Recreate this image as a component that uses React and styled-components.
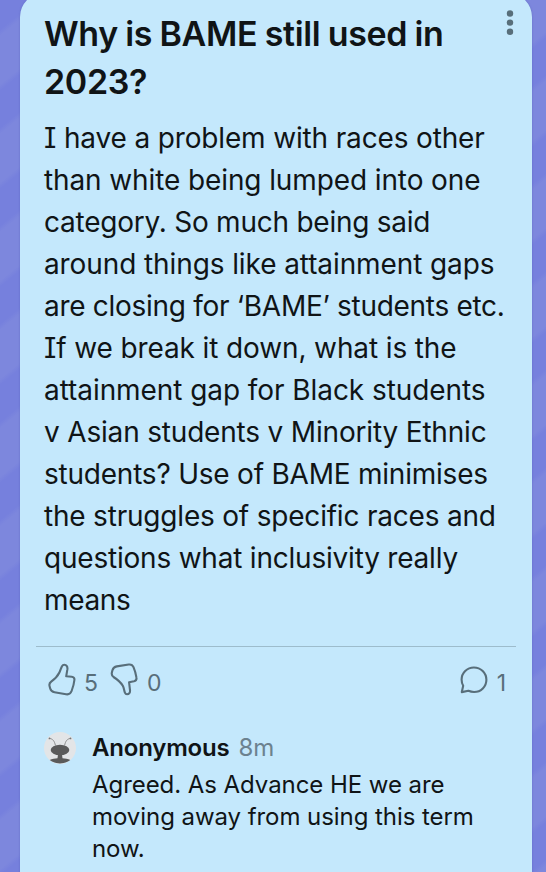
import React from 'react';
import styled, { createGlobalStyle } from 'styled-components';

const GlobalStyle = createGlobalStyle`
    *, *::before, *::after {
        box-sizing: border-box;
    }

    body {
        margin: 0;
        font-family: Inter, 'Liberation Sans', sans-serif;
        color: #101416;
        overflow: hidden;
    }
`;

const Board = styled.main`
    width: 546px;
    height: 872px;
    padding: 0 14px 0 20px;
    overflow: hidden;
    background: repeating-linear-gradient(
        140.8deg,
        #7680dd 0,
        #7680dd 23px,
        #7d87dd 28px,
        #7d87dd 65.5px,
        #7680dd 70.5px,
        #7680dd 76px
    );
`;

const Card = styled.article`
    height: 940px;
    margin-top: -7px;
    padding: 17px 16px 0;
    border-radius: 24px;
    background: #c4e8fc;
    box-shadow: 0 0 2px rgba(60, 70, 160, 0.4);
`;

const CardHeader = styled.header`
    display: flex;
    justify-content: space-between;
    padding-left: 8px;
`;

const Title = styled.h1`
    margin: 0;
    font-size: 34px;
    line-height: 48px;
    font-weight: 600;
    letter-spacing: -0.33px;
    word-spacing: -0.9px;
    white-space: pre-line;
`;

const MenuButton = styled.button`
    display: flex;
    width: 12px;
    height: 26px;
    padding: 0;
    border: 0;
    background: none;
    color: #586e7a;
`;

const PostBody = styled.p`
    margin: 11px 0 25px 8px;
    font-size: 28px;
    line-height: 42px;
    font-feature-settings: 'cv08';
    white-space: pre;
`;

const Line = styled.span`
    display: block;
    letter-spacing: ${({ $tracking }) => $tracking}px;
`;

const Reactions = styled.div`
    display: flex;
    align-items: center;
    height: 73px;
    padding: 0 10px 0 12px;
    border-top: 1px solid #9dbccc;
    color: #586e7a;
`;

const Reaction = styled.div`
    display: flex;
    align-items: center;
    gap: ${({ $gap }) => $gap}px;
    margin-right: ${({ $after }) => $after || 0}px;
    margin-left: ${({ $end }) => ($end ? 'auto' : '0')};
    font-size: 23px;
    line-height: 32px;

    svg {
        margin-bottom: 7px;
    }
`;

const Comment = styled.section`
    display: flex;
    gap: 16px;
    padding: 12px 0 0 8px;
    letter-spacing: -0.06px;
`;

const Avatar = styled.svg`
    flex: none;
    width: 32px;
    height: 32px;
    margin-top: 1px;
`;

const CommentMeta = styled.div`
    display: flex;
    gap: 9px;
    height: 38px;
    font-size: 24px;
    line-height: 34px;
`;

const Author = styled.span`
    font-weight: 600;
    letter-spacing: -0.2px;
`;

const Time = styled.time`
    color: #6c828f;
`;

const CommentText = styled.p`
    margin: 0;
    font-size: 24px;
    line-height: 32px;
    white-space: pre;
`;

const title = `Why is BAME still used in
2023?`;

const body = [
    { text: 'I have a problem with races other', tracking: -0.15 },
    { text: 'than white being lumped into one', tracking: -0.11 },
    { text: 'category. So much being said', tracking: -0.24 },
    { text: 'around things like attainment gaps', tracking: -0.1 },
    { text: 'are closing for ‘BAME’ students etc.', tracking: -0.29 },
    { text: 'If we break it down, what is the', tracking: -0.12 },
    { text: 'attainment gap for Black students', tracking: -0.07 },
    { text: 'v Asian students v Minority Ethnic', tracking: -0.18 },
    { text: 'students? Use of BAME minimises', tracking: -0.22 },
    { text: 'the struggles of specific races and', tracking: -0.2 },
    { text: 'questions what inclusivity really', tracking: -0.21 },
    { text: 'means', tracking: -0.35 },
];

const reply = `Agreed. As Advance HE we are
moving away from using this term
now.`;

const outline = {
    fill: 'none',
    stroke: 'currentColor',
    strokeWidth: 2.1,
    strokeLinejoin: 'round',
    strokeLinecap: 'round',
};

const DotsIcon = () => (
    <svg width="12" height="26" viewBox="0 0 12 26" fill="currentColor">
        <circle cx="6" cy="3.5" r="3.2" />
        <circle cx="6" cy="12.6" r="3.2" />
        <circle cx="6" cy="21.7" r="3.2" />
    </svg>
);

const ThumbUp = () => (
    <svg width="28" height="33" viewBox="0 0 28 33" {...outline}>
        <path d="M16.3 1.8C18.6 1.8 19.7 3.8 19.4 6.2L18.2 13.3L23.8 13.7C25.6 13.9 26.6 15.1 26.4 17C26 21 24.8 24.8 23.6 28C22.6 30.6 20.6 31.7 18 31.2L6.5 29.3C4.3 28.9 2.8 27.6 2.2 25.5L1.6 23.3C1 21.2 1.7 19.7 3.2 18.6C6.6 16.2 9.6 13.2 11.4 9.5C12.6 7 13 5 14 3.2C14.5 2.3 15.2 1.8 16.3 1.8Z" />
    </svg>
);

const ThumbDown = () => (
    <svg width="28" height="33" viewBox="0 0 28 33" {...outline}>
        <path d="M17 31.3C19.1 31.3 20.3 29.7 20 27.2L19.1 19.3L24 18.3C26 17.8 26.8 16.3 26.4 14.4C25.8 10.8 24.9 7.5 23.5 4.2C22.6 2 20.9 1.2 18.7 1.5L6.8 3.4C4.6 3.8 3.1 5.1 2.5 7.1L1.9 9.5C1.4 11.6 2 13 3.5 14C7.3 16.4 10.7 19.2 12.8 22.8C14.1 25.2 14 27.5 14.9 29.7C15.3 30.7 15.9 31.3 17 31.3Z" />
    </svg>
);

const BubbleIcon = () => (
    <svg width="28" height="28" viewBox="0 0 28 28" {...outline}>
        <path d="M1.8 26.1L3.2 19.8C2 17.8 1.6 15.9 1.6 13.6C1.6 6.8 7.1 1.5 13.9 1.5S26.4 7 26.4 13.8S21 26 14.1 26C11.9 26 10.2 25.6 8.4 24.8Z" />
    </svg>
);

const AnonymousAvatar = () => (
    <Avatar viewBox="0 0 32 32">
        <circle cx="16" cy="16" r="16" fill="#e3e5e7" />
        <g fill="none" stroke="#777" strokeWidth="0.8">
            <path d="M5.5 6.4C8.5 6.7 10.6 9 11.4 13.5" />
            <path d="M26.5 6.4C23.5 6.7 21.4 9 20.6 13.5" />
        </g>
        <circle cx="5.5" cy="6.4" r="0.9" fill="#777" />
        <circle cx="26.5" cy="6.4" r="0.9" fill="#777" />
        <ellipse cx="16" cy="18" rx="9.3" ry="5.3" fill="#5a5a5a" />
        <path d="M14 22.5H18L18.5 26.3C21 26.6 24 26.6 26.3 28C20.5 32.6 11.5 32.6 5.7 28C8 26.6 11 26.6 13.5 26.3Z" fill="#5a5a5a" />
    </Avatar>
);

const App = () => {
    return (
        <>
            <GlobalStyle />
            <Board>
                <Card>
                    <CardHeader>
                        <Title>{title}</Title>
                        <MenuButton aria-label="Post actions">
                            <DotsIcon />
                        </MenuButton>
                    </CardHeader>
                    <PostBody>
                        {body.map(line => (
                            <Line key={line.text} $tracking={line.tracking}>{line.text}</Line>
                        ))}
                    </PostBody>
                    <Reactions>
                        <Reaction $gap={8} $after={12}>
                            <ThumbUp />
                            <span>5</span>
                        </Reaction>
                        <Reaction $gap={9}>
                            <ThumbDown />
                            <span>0</span>
                        </Reaction>
                        <Reaction $gap={9} $end>
                            <BubbleIcon />
                            <span>1</span>
                        </Reaction>
                    </Reactions>
                    <Comment>
                        <AnonymousAvatar />
                        <div>
                            <CommentMeta>
                                <Author>Anonymous</Author>
                                <Time>8m</Time>
                            </CommentMeta>
                            <CommentText>{reply}</CommentText>
                        </div>
                    </Comment>
                </Card>
            </Board>
        </>
    );
};

export default App;
